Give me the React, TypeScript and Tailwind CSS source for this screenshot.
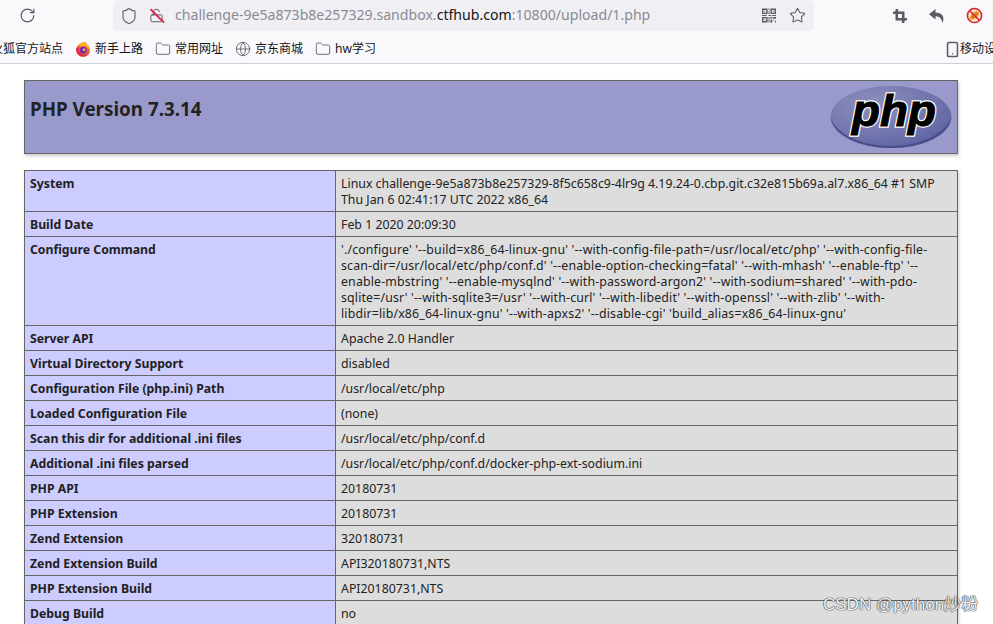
import React from "react";
import { RotateCw, Shield, LockOpen, Star, Folder, Globe, Smartphone } from "lucide-react";

const rows: [string, React.ReactNode][] = [
  ["System", <>Linux challenge-9e5a873b8e257329-8f5c658c9-4lr9g 4.19.24-0.cbp.git.c32e815b69a.al7.x86_64 #1 SMP<br />Thu Jan 6 02:41:17 UTC 2022 x86_64</>],
  ["Build Date", "Feb 1 2020 20:09:30"],
  ["Configure Command", <span className="tracking-[0.16px]">'./configure' '--build=x86_64-linux-gnu' '--with-config-file-path=/usr/local/etc/php' '--with-config-file-<br />scan-dir=/usr/local/etc/php/conf.d' '--enable-option-checking=fatal' '--with-mhash' '--enable-ftp' '--<br />enable-mbstring' '--enable-mysqlnd' '--with-password-argon2' '--with-sodium=shared' '--with-pdo-<br />sqlite=/usr' '--with-sqlite3=/usr' '--with-curl' '--with-libedit' '--with-openssl' '--with-zlib' '--with-<br />libdir=lib/x86_64-linux-gnu' '--with-apxs2' '--disable-cgi' 'build_alias=x86_64-linux-gnu'</span>],
  ["Server API", "Apache 2.0 Handler"],
  ["Virtual Directory Support", "disabled"],
  ["Configuration File (php.ini) Path", "/usr/local/etc/php"],
  ["Loaded Configuration File", "(none)"],
  ["Scan this dir for additional .ini files", "/usr/local/etc/php/conf.d"],
  ["Additional .ini files parsed", "/usr/local/etc/php/conf.d/docker-php-ext-sodium.ini"],
  ["PHP API", "20180731"],
  ["PHP Extension", "20180731"],
  ["Zend Extension", "320180731"],
  ["Zend Extension Build", "API320180731,NTS"],
  ["PHP Extension Build", "API20180731,NTS"],
  ["Debug Build", "no"],
];

function Bookmark({ icon, label }: { icon: React.ReactNode; label: string }) {
  return (
    <div className="flex items-center gap-[4px] shrink-0">
      {icon}
      <span>{label}</span>
    </div>
  );
}

function FirefoxIcon() {
  return (
    <svg width="16" height="17" viewBox="0 0 16 16">
      <circle cx="8" cy="8.6" r="7" fill="#f0642c" />
      <path d="M3 3.5C5 1 10 0 11.5 1c-.5 1 .5 2 2 3.5 1 1.5 1.5 3 1.4 4.5-2-3-5-5-7-4.5C5.500 5 4 5 3 3.500z" fill="#ffb02e" />
      <circle cx="8.300" cy="8.700" r="3.400" fill="#6a2bb8" />
      <circle cx="9" cy="8.300" r="1.500" fill="#f6a13a" />
      <path d="M1.200 8c.5 4 3.500 7 7 7 2.500 0 4.500-1 5.500-3-2.500 2-6.500 1.500-8.500-1-1-1.200-1.500-3-.800-5C2.500 6 1.500 6.500 1.200 8z" fill="#e22850" />
    </svg>
  );
}

function QrIcon() {
  return (
    <svg width="14" height="15" viewBox="0 0 15 15" fill="#5b5b66">
      <path fillRule="evenodd" d="M0 0h6v6H0zM1.500 1.500v3h3v-3zM9 0h6v6H9zM10.500 1.500v3h3v-3zM0 9h6v6H0zM1.500 10.500v3h3v-3z" />
      <rect x="2.500" y="2.500" width="1" height="1" />
      <rect x="11.500" y="2.500" width="1" height="1" />
      <rect x="2.500" y="11.500" width="1" height="1" />
      <path d="M7 0h1v2H7zM7 3h1v3H7zM7 7h3v1H7zM0 7h5v1H0zM11 7h4v1h-4zM9 9h2v2H9zM12 9h3v2h-3zM7 9h1v6H7zM9 12h2v3H9zM12 12h1v1h-1zM14 13h1v2h-1z" />
    </svg>
  );
}

function CropIcon() {
  return (
    <svg width="14" height="14" viewBox="0 0 14 14" fill="none" stroke="#5b5b66" strokeWidth="2.600">
      <path d="M3.800 0V10.200H14" />
      <path d="M0 3.800H10.200V14" />
    </svg>
  );
}

function ReplyIcon() {
  return (
    <svg width="15" height="14" viewBox="0 0 15 14" fill="#5b5b66">
      <path d="M6.500 0L0 5.300 6.500 10.600V7.200c3.200 0 5 1.300 6 3.800.6 1.300.8 2.200 1 3 1.200-2.800 1.200-5.600 0-7.500-1.400-2-3.600-3-7-3.100z" />
    </svg>
  );
}

function BlockedExtIcon() {
  return (
    <svg width="17" height="17" viewBox="0 0 18 18">
      <circle cx="9" cy="9" r="7.500" fill="#f7e6d4" />
      <path d="M4 12c0-2.500 3-6 5.500-7 2.500-1 4.500 0 4.500 2s-2.500 4.500-4.500 5.500-5.500 1.800-5.500-.500z" fill="#e8912a" />
      <circle cx="7.500" cy="10" r="1" fill="#b96a12" />
      <circle cx="11" cy="7.500" r="1" fill="#b96a12" />
      <circle cx="9" cy="9" r="7.500" fill="none" stroke="#d8232a" strokeWidth="1.600" />
      <path d="M3.700 3.700l10.600 10.600" stroke="#d8232a" strokeWidth="1.600" />
    </svg>
  );
}

function PhpLogo() {
  const textProps = {
    x: 64,
    y: 41,
    textAnchor: "middle" as const,
    fontFamily: "'Liberation Sans', sans-serif",
    fontWeight: 700,
    fontStyle: "italic" as const,
    fontSize: 44,
    textLength: 84,
    lengthAdjust: "spacingAndGlyphs" as const,
  };
  return (
    <svg width="122" height="64" viewBox="0 0 122 64" className="block">
      <defs>
        <radialGradient id="ph" cx="35%" cy="30%" r="80%">
          <stop offset="0%" stopColor="#8e90bd" />
          <stop offset="60%" stopColor="#7376ae" />
          <stop offset="100%" stopColor="#5a5f9e" />
        </radialGradient>
      </defs>
      <ellipse cx="61" cy="32" rx="60.500" ry="31" fill="url(#ph)" />
      <path d="M1 33C3 50 30 63 61 63c31 0 59-13 60-31-4 16-30 29-60 29-30 0-55-12-60-28z" fill="#484c89" />
      <text {...textProps} fill="#fff" stroke="#fff" strokeWidth="3.400">php</text>
      <text {...textProps} fill="#000" stroke="#000" strokeWidth="1">php</text>
    </svg>
  );
}

export default function App() {
  return (
    <div className="relative h-[624px] w-[993px] overflow-hidden bg-white font-['Noto_Sans','Noto_Sans_CJK_SC',sans-serif] text-[#222]">
      {/* Toolbar */}
      <div className="h-[64px] border-b border-[#cfcfd8] bg-[#f9f9fb]">
        <div className="flex h-[31px] items-center">
          <div className="flex w-[113px] shrink-0 pl-[19px]">
            <RotateCw size={17} strokeWidth={1.6} className="text-[#5b5b66]" />
          </div>
          <div className="flex h-[31px] w-[701px] shrink-0 items-center rounded-[5px] bg-[#f0f0f4] pl-[7px]">
            <Shield size={18} strokeWidth={1.5} className="text-[#5b5b66]" />
            <div className="relative ml-[11px] h-[16px] w-[16px]">
              <LockOpen size={15} strokeWidth={1.6} className="text-[#5b5b66]" />
              <div className="absolute left-[-1px] top-[7px] h-[1.500px] w-[19px] rotate-45 bg-[#e22850]" />
            </div>
            <div className="ml-[10px] pb-[1px] text-[14.100px] whitespace-nowrap text-[#8a8a94]">
              challenge-9e5a873b8e257329.sandbox.<span className="text-[#15141a]">ctfhub.com</span>:10800/upload/1.php
            </div>
            <div className="ml-auto flex items-center gap-[13px] pr-[8px]">
              <QrIcon />
              <Star size={17} strokeWidth={1.5} className="text-[#5b5b66]" />
            </div>
          </div>
          <div className="ml-[79px] flex items-center gap-[22px]">
            <CropIcon />
            <ReplyIcon />
            <BlockedExtIcon />
          </div>
        </div>
        <div className="relative flex h-[32px] items-center pt-[4px] text-[12px] text-[#15141a]">
          <div className="ml-[-9px] flex w-[84px] shrink-0 whitespace-nowrap">火狐官方站点</div>
          <div className="flex items-center gap-[12px]">
            <Bookmark icon={<FirefoxIcon />} label="新手上路" />
            <Bookmark icon={<Folder size={16} strokeWidth={1.300} className="text-[#5b5b66]" />} label="常用网址" />
            <Bookmark icon={<Globe size={16} strokeWidth={1.300} className="text-[#5b5b66]" />} label="京东商城" />
            <Bookmark icon={<Folder size={16} strokeWidth={1.300} className="text-[#5b5b66]" />} label="hw学习" />
          </div>
          <div className="ml-auto flex items-center whitespace-nowrap">
            <Smartphone size={17} strokeWidth={2.200} className="mr-[-1px] text-[#5b5b66]" />
            <span className="w-[33px] overflow-hidden">移动设备</span>
          </div>
        </div>
      </div>

      {/* Page */}
      <div className="mx-[24px] w-[934px] pt-[16px] text-[12.340px] leading-[16px]">
        <div className="flex h-[74px] justify-between border border-[#666] bg-[#9999cc] px-[5px] shadow-[1px_2px_3px_#ccc]">
          <h1 className="pt-[13px] text-[18.800px] leading-[30px] font-bold">PHP Version 7.3.14</h1>
          <div className="pt-[4px]">
            <PhpLogo />
          </div>
        </div>
        <table className="mt-[16px] w-[933px] table-fixed border-collapse shadow-[1px_2px_3px_#ccc]">
          <colgroup>
            <col className="w-[311px]" />
            <col className="w-[622px]" />
          </colgroup>
          <tbody>
            {rows.map(([k, v]) => (
              <tr key={k}>
                <td className="border border-[#666] bg-[#ccccff] px-[5px] pt-[5px] pb-[3px] align-top text-[12.250px] font-bold">{k}</td>
                <td className="border border-[#666] bg-[#dddddd] px-[5px] pt-[5px] pb-[3px] align-top whitespace-nowrap">{v}</td>
              </tr>
            ))}
          </tbody>
        </table>
      </div>

      <div className="absolute left-[823px] top-[595px] font-['Liberation_Sans','Noto_Sans_CJK_SC',sans-serif] text-[17px] leading-[20px] whitespace-nowrap text-[#f4f4f4] [text-shadow:0_0_1px_#444,0_0_1px_#444,0_0_1px_#444]">
        CSDN @python炒粉
      </div>
    </div>
  );
}
